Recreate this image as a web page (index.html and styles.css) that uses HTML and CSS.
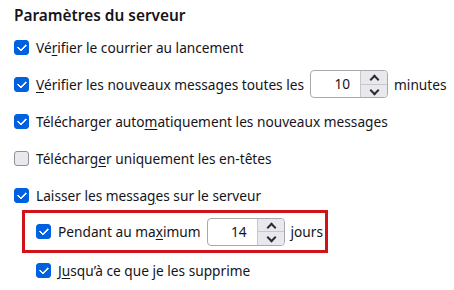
FILE: index.html
```html
<!DOCTYPE html>
<html lang="fr">
<head>
<meta charset="utf-8">
<link rel="stylesheet" href="styles.css">
</head>
<body>
<div class="page">
  <div class="main">
    <h2 class="title">Paramètres du serveur</h2>
    <label class="row"><span class="cb on"></span><span>Vé<u>r</u>ifier le courrier au lancement</span></label>
    <label class="row"><span class="cb on"></span><span><u>V</u>érifier les nouveaux messages toutes les</span>
      <span class="spin"><span class="num">10</span><span class="btns"><span class="b up"></span><span class="b down"></span></span></span>
      <span>minutes</span></label>
    <label class="row"><span class="cb on"></span><span>Télécharger auto<u>m</u>atiquement les nouveaux messages</span></label>
    <label class="row"><span class="cb"></span><span>Télécharg<u>e</u>r uniquement les en-têtes</span></label>
    <label class="row"><span class="cb on"></span><span>Laisser les messa<u>g</u>es sur le serveur</span></label>
  </div>
  <div class="sub">
    <label class="row boxed"><span class="cb on"></span><span>Pendant au ma<u>x</u>imum</span>
      <span class="spin"><span class="num">14</span><span class="btns"><span class="b up"></span><span class="b down"></span></span></span>
      <span>jours</span></label>
    <label class="row last"><span class="cb on"></span><span>J<u>u</u>squ’à ce que je les supprime</span></label>
  </div>
</div>
</body>
</html>
```
FILE: styles.css
```css
html, body { margin: 0; padding: 0; background: #fff; }
body {
  font-family: "Noto Sans", "Open Sans", sans-serif;
  font-size: 13.7px;
  color: #15141a;
}
.page { padding: 0 0 0 14px; }
.main { display: flex; flex-direction: column; gap: 7px; }
.title {
  margin: 0;
  height: 25px;
  padding-top: 3px;
  box-sizing: border-box;
  font-size: 15.4px;
  font-weight: 600;
  line-height: 26px;
}
.row {
  display: flex;
  align-items: center;
  gap: 6px;
  height: 30px;
  white-space: nowrap;
}
.row u { text-decoration-thickness: 1px; text-underline-offset: 2px; }
.cb {
  width: 15px;
  height: 15px;
  box-sizing: border-box;
  border: 1px solid #8f8f9d;
  border-radius: 3px;
  background: #e9e9ed;
  flex: none;
  margin-right: 1px;
  position: relative;
}
.cb.on {
  background: #0061e0;
  border-color: #0061e0;
}
.cb.on::after {
  content: "";
  position: absolute;
  left: 4px;
  top: 1px;
  width: 4px;
  height: 7px;
  border: solid #fff;
  border-width: 0 2px 2px 0;
  border-radius: 1px;
  transform: rotate(45deg);
}
.sub { margin-left: 8px; }
.boxed {
  width: 306px;
  height: 43px;
  box-sizing: border-box;
  border: 3px solid #d0121b;
  padding-left: 11px;
}
.last { height: 34px; padding-left: 14px; }
.spin {
  display: flex;
  width: 78px;
  height: 28px;
  box-sizing: border-box;
  border: 1px solid #a8a8b0;
  border-radius: 4px;
  background: #fff;
  overflow: hidden;
}
.num {
  flex: 1;
  text-align: right;
  padding-right: 10px;
  line-height: 26px;
}
.btns {
  width: 26px;
  display: flex;
  flex-direction: column;
  border-left: 1px solid #c8c8cc;
  background: #e9e9ed;
}
.b {
  flex: 1;
  position: relative;
}
.b.up { border-bottom: 1px solid #c8c8cc; }
.b::after {
  content: "";
  position: absolute;
  left: 10px;
  width: 5px;
  height: 5px;
  border: solid #2b2b33;
  border-width: 2px 2px 0 0;
}
.b.up::after { top: 5px; transform: rotate(-45deg); }
.b.down::after { top: 2px; transform: rotate(135deg); }
```
